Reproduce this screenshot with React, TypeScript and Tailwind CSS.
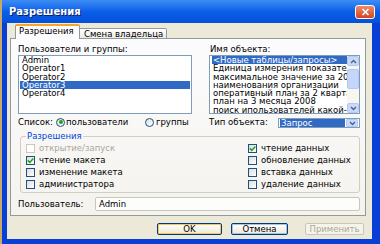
import React from "react"

const users = ["Admin", "Operator1", "Operator2", "Operator3", "Operator4"]

const objects = [
  "<Новые таблицы/запросы>",
  "Единица измерения показателя",
  "максимальное значение за 2008",
  "наименования организации",
  "оперативный план за 2 квартал",
  "план на 3 месяца 2008",
  "поиск ипользователей какой-либо",
]

const leftPerms = [
  { label: "открытие/запуск", checked: false, disabled: true },
  { label: "чтение макета", checked: true },
  { label: "изменение макета", checked: false },
  { label: "администратора", checked: false },
]

const rightPerms = [
  { label: "чтение данных", checked: true },
  { label: "обновление данных", checked: false },
  { label: "вставка данных", checked: false },
  { label: "удаление данных", checked: false },
]

function Chevron({ up = false }: { up?: boolean }) {
  return (
    <svg width="7" height="5" viewBox="0 0 7 5">
      <path
        d={up ? "M1 4 L3.5 1.5 L6 4" : "M1 1 L3.5 3.5 L6 1"}
        fill="none"
        stroke="#4d6185"
        strokeWidth="1.4"
      />
    </svg>
  )
}

function CheckBox({ label, checked, disabled }: { label: string; checked: boolean; disabled?: boolean }) {
  return (
    <div className="flex items-center h-[12px]">
      <span
        className={`w-[9px] h-[9px] border flex items-center justify-center ${
          disabled ? "border-[#cac8bb] bg-white" : "border-[#1c5180] bg-gradient-to-br from-[#dcdcd7] to-white"
        }`}
      >
        {checked && (
          <svg width="7" height="7" viewBox="0 0 7 7">
            <path d="M0.8 3.4 L2.8 5.4 L6.3 1.4" fill="none" stroke="#21a121" strokeWidth="1.5" />
          </svg>
        )}
      </span>
      <span className={`ml-[4px] ${disabled ? "text-[#aca899]" : ""}`}>{label}</span>
    </div>
  )
}

function Radio({ checked }: { checked: boolean }) {
  return (
    <span className="w-[9px] h-[9px] rounded-full border border-[#1c5180] bg-gradient-to-br from-[#dcdcd7] to-white flex items-center justify-center">
      {checked && <span className="w-[4px] h-[4px] rounded-full bg-[#21a121]" />}
    </span>
  )
}

export default function App() {
  return (
    <div className="w-[380px] h-[244px] overflow-hidden flex flex-col bg-[#0a3fd6] border-l-2 border-[#c6a96c] font-['DejaVu_Sans','Noto_Sans',sans-serif] text-[8.5px] leading-[9px] text-black">
      {/* title bar */}
      <div className="h-[23px] shrink-0 flex items-center pl-[7px] pr-[5px] bg-gradient-to-b from-[#3d8df5] via-[#0a5ee8] to-[#0650d8]">
        <span className="font-bold text-[10px] text-white [text-shadow:1px_1px_0_#0a1c6a]">Разрешения</span>
        <span className="ml-auto w-[20px] h-[14px] rounded-[3px] border border-white bg-gradient-to-b from-[#f08a6a] to-[#d4421c] flex items-center justify-center">
          <svg width="9" height="8" viewBox="0 0 9 8">
            <path d="M1.5 1 L7.5 7 M7.5 1 L1.5 7" stroke="white" strokeWidth="1.6" />
          </svg>
        </span>
      </div>

      {/* body */}
      <div className="flex-1 ml-[5px] mr-[8px] mb-[5px] bg-[#ece9d8] flex flex-col pt-[1px]">
        {/* tabs */}
        <div className="relative z-10 flex items-end h-[15px] ml-[8px]">
          <div className="h-[15px] w-[65px] border border-b-0 border-[#919b9c] border-t-2 border-t-[#f5a623] bg-[#fcfcfe] pl-[3px] pt-[1px] rounded-t-[2px]">
            Разрешения
          </div>
          <div className="h-[11px] w-[87px] border border-l-0 border-[#919b9c] bg-gradient-to-b from-white to-[#ecebe6] pl-[4px] leading-[10px] rounded-tr-[2px]">
            Смена владельца
          </div>
        </div>

        {/* tab panel */}
        <div className="-mt-px ml-[3px] mr-[6px] border border-[#919b9c] bg-gradient-to-b from-[#fcfcfe] to-[#f4f3ee] pt-[6px] pl-[7px] pr-[5px] pb-[4px]">
          <div className="flex gap-[17px]">
            {/* users */}
            <div className="w-[174px] shrink-0 flex flex-col">
              <div className="h-[9px]">Пользователи и группы:</div>
              <div className="mt-[1px] h-[59px] border border-[#7f9db9] bg-white px-[1px] leading-[8.25px]">
                {users.map((u) => (
                  <div
                    key={u}
                    className={`h-[8.25px] pl-[2px] ${u === "Operator3" ? "bg-[#316ac5] text-white" : ""}`}
                  >
                    {u}
                  </div>
                ))}
              </div>
            </div>

            {/* objects */}
            <div className="flex-1 min-w-0 flex flex-col">
              <div className="h-[9px] pl-[1px]">Имя объекта:</div>
              <div className="mt-[1px] h-[59px] border border-[#7f9db9] bg-white flex">
                <div className="flex-1 min-w-0 overflow-hidden pl-[2px] leading-[8.25px]">
                  {objects.map((o, i) => (
                    <div
                      key={o}
                      className={`h-[8.25px] pl-[1px] whitespace-nowrap ${i === 0 ? "bg-[#316ac5] text-white" : ""}`}
                    >
                      {o}
                    </div>
                  ))}
                </div>
                <div className="w-[12px] shrink-0 flex flex-col bg-[#f7f6f1]">
                  <div className="h-[10px] rounded-[2px] border border-[#b4c8f6] bg-[#c9d9fc] flex items-center justify-center">
                    <Chevron up />
                  </div>
                  <div className="mt-[3px] h-[20px] rounded-[2px] border border-[#b4c8f6] bg-[#c5d6fc]" />
                  <div className="flex-1" />
                  <div className="h-[10px] rounded-[2px] border border-[#b4c8f6] bg-[#c9d9fc] flex items-center justify-center">
                    <Chevron />
                  </div>
                </div>
              </div>
            </div>
          </div>

          {/* list type / object type */}
          <div className="mt-[2px] h-[12px] flex items-center">
            <div className="w-[174px] shrink-0 flex items-center">
              <span className="w-[38px]">Список:</span>
              <span className="w-[89px] flex items-center">
                <Radio checked />
                <span className="ml-[1px]">пользователи</span>
              </span>
              <span className="flex items-center">
                <Radio checked={false} />
                <span className="ml-[2px]">группы</span>
              </span>
            </div>
            <div className="ml-[17px] flex-1 min-w-0 flex items-center">
              <span className="w-[69px] shrink-0">Тип объекта:</span>
              <div className="flex-1 h-[10px] mt-[2px] border border-[#7f9db9] bg-white flex items-center px-[1px]">
                <span className="flex-1 h-[8px] bg-[#316ac5] text-white leading-[8px] pl-[1px]">Запрос</span>
                <span className="ml-[1px] w-[12px] h-[8px] rounded-[1px] bg-[#c9d9fc] border border-[#b4c8f6] flex items-center justify-center">
                  <Chevron />
                </span>
              </div>
            </div>
          </div>

          {/* permissions group */}
          <fieldset className="mt-[4px] ml-[2px] border border-[#d0d0bf] rounded-[3px] px-[5px] pt-[1px] pb-[2px]">
            <legend className="px-[1px] text-[#0046d5] leading-[9px]">Разрешения</legend>
            <div className="grid grid-cols-[222px_1fr]">
              <div className="flex flex-col">
                {leftPerms.map((p) => (
                  <CheckBox key={p.label} label={p.label} checked={p.checked} disabled={p.disabled} />
                ))}
              </div>
              <div className="flex flex-col">
                {rightPerms.map((p) => (
                  <CheckBox key={p.label} label={p.label} checked={p.checked} />
                ))}
              </div>
            </div>
          </fieldset>

          {/* user */}
          <div className="mt-[4px] flex items-center h-[14px]">
            <span className="w-[77px]">Пользователь:</span>
            <div className="flex-1 h-[14px] border border-[#c9c7ba] rounded-[2px] bg-[#fdfdfb] flex items-center pl-[3px]">
              Admin
            </div>
          </div>
        </div>

        {/* buttons */}
        <div className="mt-[7px] flex h-[12px]">
          <button className="ml-[150px] w-[65px] h-[12px] rounded-[2px] border border-[#003c74] bg-gradient-to-b from-white to-[#ece9d8] shadow-[inset_0_0_0_1px_#f7c46a] leading-[9px]">
            OK
          </button>
          <button className="ml-[9px] w-[57px] h-[12px] rounded-[2px] border border-[#003c74] bg-gradient-to-b from-white to-[#ece9d8] shadow-[inset_0_0_0_1px_#a8c2ee] leading-[9px]">
            Отмена
          </button>
          <button className="ml-[17px] w-[59px] h-[12px] rounded-[2px] border border-[#c9c7ba] bg-[#f5f4ea] text-[#aca899] leading-[9px]">
            Применить
          </button>
        </div>
      </div>
    </div>
  )
}
